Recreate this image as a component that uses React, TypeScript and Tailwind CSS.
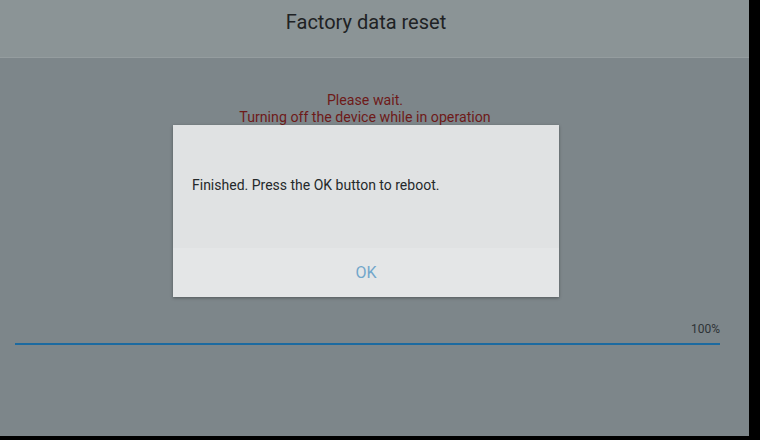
import React from "react";

export default function App() {
  return (
    <div className="w-[760px] h-[440px] bg-black overflow-hidden" style={{ fontFamily: 'Roboto, "Noto Sans", sans-serif' }}>
      <div className="relative w-[749px] h-[436px] bg-[#7d868a] flex flex-col">
        {/* header */}
        <div className="h-[58px] bg-[#8b9496] border-b border-[#959d9f] flex justify-center pt-[8px] pr-[17px]">
          <h1 className="text-[20px] leading-[28px] text-[#1e2224]">Factory data reset</h1>
        </div>

        {/* status */}
        <div className="flex flex-col items-center pt-[34px] pr-[19px] text-[14.2px] leading-[17px] text-[#6e1a19]">
          <p>Please wait.</p>
          <p>Turning off the device while in operation</p>
        </div>

        {/* progress */}
        <div className="mt-[196px] px-[15px] w-[735px]">
          <div className="text-right text-[12px] leading-[15px] text-[#2d3336]">100%</div>
          <div className="mt-[6px] h-[2px] bg-[#1c6aa0]" />
        </div>

        {/* dialog */}
        <div className="absolute left-[173px] top-[125px] w-[386px] h-[172px] bg-[#e0e2e3] shadow-[0_1px_3px_rgba(0,0,0,0.35)] flex flex-col">
          <div className="h-[123px] flex items-center px-[19px] pb-[2px]">
            <p className="text-[14px] text-[#25292b]">Finished. Press the OK button to reboot.</p>
          </div>
          <div className="flex-1 bg-[#e4e6e7] flex items-center justify-center">
            <span className="text-[16px] text-[#72a6cb]">OK</span>
          </div>
        </div>
      </div>
    </div>
  );
}
